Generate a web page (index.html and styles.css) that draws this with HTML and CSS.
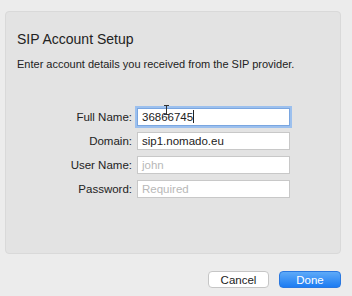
FILE: index.html
```html
<!DOCTYPE html>
<html lang="en">
<head>
    <meta charset="UTF-8">
    <title>SIP Account Setup</title>
    <link rel="stylesheet" href="styles.css">
</head>
<body>
    <div class="sheet">
        <div class="panel">
            <h1>SIP Account Setup</h1>
            <p class="intro">Enter account details you received from the SIP provider.</p>

            <div class="form">
                <div class="row">
                    <label>Full Name:</label>
                    <div class="field focused">36866745<span class="caret"></span>
                        <svg class="ibeam" width="7" height="10" viewBox="0 0 7 10">
                            <path d="M1 0.5h5M1 9.5h5M3.5 0.5v9" stroke="#333" stroke-width="1" fill="none"/>
                        </svg>
                    </div>
                </div>
                <div class="row">
                    <label>Domain:</label>
                    <div class="field">sip1.nomado.eu</div>
                </div>
                <div class="row">
                    <label>User Name:</label>
                    <div class="field placeholder">john</div>
                </div>
                <div class="row">
                    <label>Password:</label>
                    <div class="field placeholder">Required</div>
                </div>
            </div>
        </div>

        <div class="buttons">
            <button class="btn">Cancel</button>
            <button class="btn primary">Done</button>
        </div>
    </div>
</body>
</html>
```

FILE: styles.css
```css
body {
    margin: 0;
    padding: 0;
    background-color: #ececec;
    font-family: 'Liberation Sans', Arial, sans-serif;
    color: #222;
}

.sheet {
    width: 352px;
    height: 296px;
    padding: 11px 11px 0 5px;
    box-sizing: border-box;
}

.panel {
    height: 243px;
    box-sizing: border-box;
    background-color: #e3e3e3;
    border: 1px solid #d9d9d9;
    border-radius: 4px;
    padding: 19px 0 0 11px;
}

h1 {
    margin: 0;
    font-size: 14px;
    font-weight: normal;
    line-height: 17px;
}

.intro {
    margin: 9px 0 0;
    font-size: 11px;
    line-height: 14px;
}

.form {
    margin-top: 37px;
    display: flex;
    flex-direction: column;
    gap: 6px;
}

.row {
    display: flex;
    align-items: center;
}

.row label {
    width: 115px;
    text-align: right;
    font-size: 11.5px;
    padding-right: 5px;
}

.field {
    width: 153px;
    height: 18px;
    box-sizing: border-box;
    background-color: #fff;
    border: 1px solid #c8c8c8;
    font-size: 11.5px;
    line-height: 16px;
    padding-left: 4px;
    position: relative;
}

.field.focused {
    border-color: #7aa6e0;
    box-shadow: 0 0 0 2px #9cc0ee;
}

.caret {
    display: inline-block;
    width: 1px;
    height: 13px;
    background-color: #222;
    vertical-align: -2px;
}

/* mouse pointer over the first field */
.ibeam {
    position: absolute;
    left: 25px;
    top: -4px;
}

.placeholder {
    color: #b8b8b8;
}

.buttons {
    display: flex;
    justify-content: flex-end;
    gap: 10px;
    margin-top: 17px;
}

.btn {
    height: 17px;
    width: 61px;
    padding: 0;
    font-family: 'Liberation Sans', Arial, sans-serif;
    font-size: 11.5px;
    border-radius: 4px;
    border: 1px solid #c6c6c6;
    background-color: #fff;
    color: #222;
}

.btn.primary {
    width: 62px;
    border-color: #2a78e0;
    background: linear-gradient(#5eaaf8, #1c7cf2);
    color: #fff;
}
```
